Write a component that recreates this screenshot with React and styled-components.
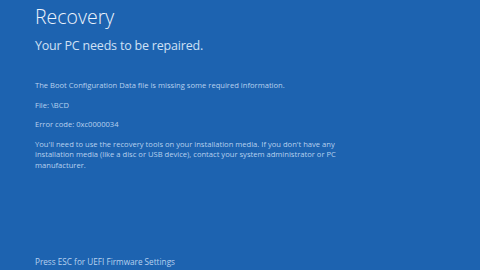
import React from "react";
import styled, { createGlobalStyle } from "styled-components";

const GlobalStyle = createGlobalStyle`
  html, body {
    margin: 0;
    padding: 0;
    background: #1d63b0;
  }
  * {
    box-sizing: border-box;
  }
`;

const Screen = styled.div`
  width: 480px;
  height: 270px;
  background: #1d63b0;
  color: #d8e6f7;
  font-family: "Open Sans", "Noto Sans", sans-serif;
  display: flex;
  flex-direction: column;
  padding: 4px 0 0 35px;
  overflow: hidden;
`;

const Title = styled.h1`
  margin: 0;
  font-size: 19.5px;
  font-weight: 300;
  line-height: 26px;
  color: #eef4fc;
`;

const Subtitle = styled.h2`
  margin: 8px 0 0;
  font-size: 12.5px;
  font-weight: 400;
  letter-spacing: -0.2px;
  line-height: 16px;
  color: #cfe0f5;
`;

const Body = styled.div`
  margin-top: 26px;
  display: flex;
  flex-direction: column;
  gap: 8.5px;
`;

const Para = styled.p`
  margin: 0;
  font-size: 7.6px;
  line-height: ${(p) => (p.$tight ? "10.5px" : "11px")};
  color: #b7d1ef;
  white-space: nowrap;
`;

const Footer = styled.div`
  margin-top: auto;
  margin-bottom: 3px;
  font-size: 8.2px;
  line-height: 11px;
  color: #b7d1ef;
`;

export default function App() {
  return (
    <Screen>
      <GlobalStyle />
      <Title>Recovery</Title>
      <Subtitle>Your PC needs to be repaired.</Subtitle>
      <Body>
        <Para>The Boot Configuration Data file is missing some required information.</Para>
        <Para>File: \BCD</Para>
        <Para>Error code: 0xc0000034</Para>
        <Para $tight>
          You'll need to use the recovery tools on your installation media. If you don't have any
          <br />
          installation media (like a disc or USB device), contact your system administrator or PC
          <br />
          manufacturer.
        </Para>
      </Body>
      <Footer>Press ESC for UEFI Firmware Settings</Footer>
    </Screen>
  );
}
